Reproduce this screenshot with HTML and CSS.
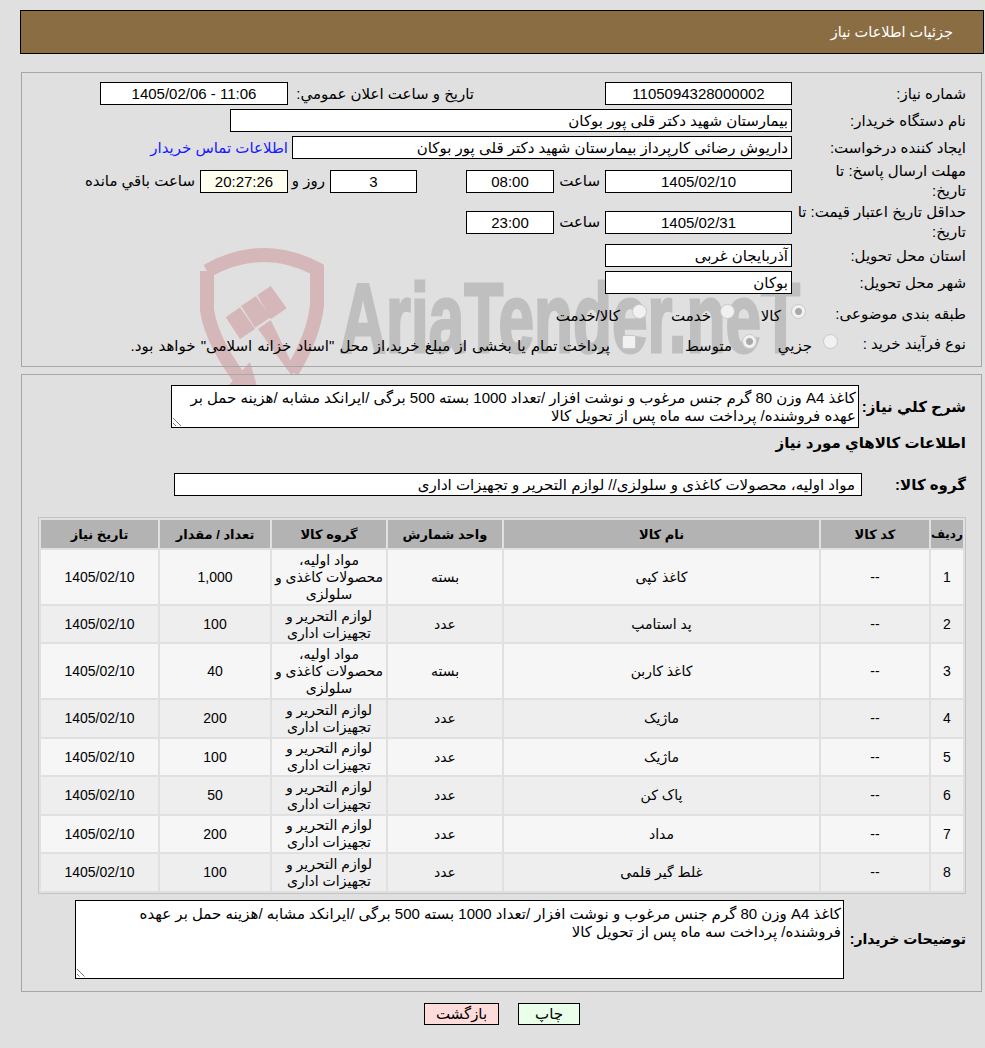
FILE: index.html
```html
<!DOCTYPE html>
<html lang="fa" dir="rtl">
<head>
    <meta charset="UTF-8">
    <title>جزئیات اطلاعات نیاز</title>
    <link rel="stylesheet" href="styles.css">
</head>
<body>
    <svg class="watermark" width="985" height="400" viewBox="0 0 985 400">
        <g class="mark-stroke">
            <path d="M207 271 Q262 240 317 269 L317 305 Q314 335 292 372"/>
            <path d="M207 271 L207 310 Q212 345 250 392"/>
        </g>
        <g class="mark-fill">
            <polygon points="225.7,317.3 240,307.3 255,329 240,339"/>
            <polygon points="241,306 256,296 270.7,317.3 255,327.7"/>
            <polygon points="257.3,295 270.7,286 286.7,308.3 270.7,319.3"/>
            <polygon points="258,329 270.7,320 295,370 291.7,375.7"/>
            <polygon points="250,362 257,386 228,386"/>
        </g>
        <text class="watermark-text" x="340" y="352" textLength="460" lengthAdjust="spacingAndGlyphs" direction="ltr">AriaTender.neT</text>
    </svg>

    <div class="page-title">جزئیات اطلاعات نیاز</div>

    <div class="panel panel-info">
        <div class="row">
            <div class="label">شماره نیاز:</div>
            <div class="field field-mid center">1105094328000002</div>
            <div class="label-announce">تاریخ و ساعت اعلان عمومي:</div>
            <div class="field field-announce center ltr">1405/02/06 - 11:06</div>
        </div>
        <div class="row">
            <div class="label">نام دستگاه خریدار:</div>
            <div class="field field-buyer">بیمارستان شهید دکتر قلی پور بوکان</div>
        </div>
        <div class="row">
            <div class="label">ایجاد کننده درخواست:</div>
            <div class="field field-creator">داریوش رضائی کارپرداز بیمارستان شهید دکتر قلی پور بوکان</div>
            <a class="contact" href="#">اطلاعات تماس خریدار</a>
        </div>
        <div class="row row-date">
            <div class="label">مهلت ارسال پاسخ: تا<br>تاریخ:</div>
            <div class="field field-mid center">1405/02/10</div>
            <div class="word">ساعت</div>
            <div class="field field-time center">08:00</div>
            <div class="field field-days center">3</div>
            <div class="word-days">روز و</div>
            <div class="field field-clock center">20:27:26</div>
            <div class="word-left">ساعت باقي مانده</div>
        </div>
        <div class="row row-date">
            <div class="label">حداقل تاریخ اعتبار قیمت: تا<br>تاریخ:</div>
            <div class="field field-mid center">1405/02/31</div>
            <div class="word">ساعت</div>
            <div class="field field-time center">23:00</div>
        </div>
        <div class="row row-place">
            <div class="label">استان محل تحویل:</div>
            <div class="field field-mid">آذربایجان غربی</div>
        </div>
        <div class="row">
            <div class="label">شهر محل تحویل:</div>
            <div class="field field-mid">بوکان</div>
        </div>
        <div class="row row-radio">
            <div class="label">طبقه بندی موضوعی:</div>
            <span class="radio radio-on radio-kala"></span><span class="radio-text text-kala">کالا</span>
            <span class="radio radio-khedmat"></span><span class="radio-text text-khedmat">خدمت</span>
            <span class="radio radio-both"></span><span class="radio-text text-both">کالا/خدمت</span>
        </div>
        <div class="row row-radio row-process">
            <div class="label">نوع فرآیند خرید :</div>
            <span class="radio radio-jozi"></span><span class="radio-text text-jozi">جزیي</span>
            <span class="radio radio-on radio-motavaset"></span><span class="radio-text text-motavaset">متوسط</span>
            <span class="check"></span><span class="radio-text text-payment">پرداخت تمام یا بخشی از مبلغ خرید،از محل "اسناد خزانه اسلامی" خواهد بود.</span>
        </div>
    </div>

    <div class="panel panel-items">
        <div class="row-desc">
            <div class="label-strong">شرح کلي نیاز:</div>
            <div class="area area-desc">کاغذ A4 وزن 80 گرم جنس مرغوب و نوشت افزار /تعداد 1000 بسته 500 برگی /ایرانکد مشابه /هزینه حمل بر عهده فروشنده/ پرداخت سه ماه پس از تحویل کالا<span class="grip"></span></div>
        </div>
        <div class="section-title">اطلاعات کالاهاي مورد نیاز</div>
        <div class="row-group">
            <div class="label-strong">گروه کالا:</div>
            <div class="field field-group">مواد اولیه، محصولات کاغذی و سلولزی// لوازم التحریر و تجهیزات اداری</div>
        </div>
        <table class="items">
            <thead>
                <tr>
                    <th class="col-num">ردیف</th>
                    <th class="col-code">کد کالا</th>
                    <th class="col-name">نام کالا</th>
                    <th class="col-unit">واحد شمارش</th>
                    <th class="col-group">گروه کالا</th>
                    <th class="col-qty">تعداد / مقدار</th>
                    <th class="col-date">تاریخ نیاز</th>
                </tr>
            </thead>
            <tbody>
                <tr class="tall"><td>1</td><td>--</td><td>کاغذ کپی</td><td>بسته</td><td>مواد اولیه، محصولات کاغذی و سلولزی</td><td>1,000</td><td>1405/02/10</td></tr>
                <tr><td>2</td><td>--</td><td>پد استامپ</td><td>عدد</td><td>لوازم التحریر و تجهیزات اداری</td><td>100</td><td>1405/02/10</td></tr>
                <tr class="tall"><td>3</td><td>--</td><td>کاغذ کاربن</td><td>بسته</td><td>مواد اولیه، محصولات کاغذی و سلولزی</td><td>40</td><td>1405/02/10</td></tr>
                <tr><td>4</td><td>--</td><td>ماژیک</td><td>عدد</td><td>لوازم التحریر و تجهیزات اداری</td><td>200</td><td>1405/02/10</td></tr>
                <tr><td>5</td><td>--</td><td>ماژیک</td><td>عدد</td><td>لوازم التحریر و تجهیزات اداری</td><td>100</td><td>1405/02/10</td></tr>
                <tr><td>6</td><td>--</td><td>پاک کن</td><td>عدد</td><td>لوازم التحریر و تجهیزات اداری</td><td>50</td><td>1405/02/10</td></tr>
                <tr><td>7</td><td>--</td><td>مداد</td><td>عدد</td><td>لوازم التحریر و تجهیزات اداری</td><td>200</td><td>1405/02/10</td></tr>
                <tr><td>8</td><td>--</td><td>غلط گیر قلمی</td><td>عدد</td><td>لوازم التحریر و تجهیزات اداری</td><td>100</td><td>1405/02/10</td></tr>
            </tbody>
        </table>
        <div class="row-notes">
            <div class="label-strong">توضیحات خریدار:</div>
            <div class="area area-notes">کاغذ A4 وزن 80 گرم جنس مرغوب و نوشت افزار /تعداد 1000 بسته 500 برگی /ایرانکد مشابه /هزینه حمل بر عهده فروشنده/ پرداخت سه ماه پس از تحویل کالا<span class="grip"></span></div>
        </div>
    </div>

    <div class="buttons">
        <button class="btn btn-print">چاپ</button>
        <button class="btn btn-back">بازگشت</button>
    </div>
</body>
</html>
```

FILE: styles.css
```css
body {
    font-family: "Liberation Sans", "DejaVu Sans", sans-serif;
    font-size: 15px;
    background: #e0e0e0;
    color: #000;
    margin: 0;
    padding: 10px 1px 0 20px;
    height: 1048px;
    overflow: hidden;
    box-sizing: border-box;
}
.page-title {
    background: #8b6d43;
    color: #fff;
    border: 1px solid #000;
    height: 42px;
    line-height: 42px;
    padding-right: 30px;
    font-size: 14.5px;
}
.panel {
    position: relative;
    border: 1px solid #a6a6a6;
    margin: 0 2px 0 1px;
    box-sizing: border-box;
}
.panel-info {
    margin-top: 18px;
    height: 295px;
    padding-top: 9px;
}
.panel-items {
    margin-top: 7px;
    height: 618px;
    padding-top: 10px;
}

/* watermark behind both panels */
.watermark {
    position: absolute;
    left: 0;
    top: 0;
}
.mark-stroke path {
    fill: none;
    stroke: #d6b7b9;
    stroke-width: 14;
}
.mark-fill polygon {
    fill: #d6b7b9;
}
.watermark-text {
    font-family: "Liberation Sans", sans-serif;
    font-weight: bold;
    font-size: 98px;
    fill: #bfbfbf;
    stroke: #bfbfbf;
    stroke-width: 3;
}

.row {
    display: flex;
    align-items: center;
    height: 23px;
    margin-bottom: 4px;
}
.label {
    width: 189px;
    padding-right: 15px;
    box-sizing: border-box;
    flex-shrink: 0;
    line-height: 20px;
}
.row-date {
    height: 36px;
    margin-bottom: 5px;
}
.row-place {
    margin-top: -1px;
}
.field {
    background: #fff;
    border: 1px solid #000;
    height: 21px;
    line-height: 21px;
    padding: 0 3px;
    white-space: nowrap;
    overflow: hidden;
    flex-shrink: 0;
}
.center {
    text-align: center;
}
.ltr {
    direction: ltr;
}
.field-mid { width: 179px; }
.field-announce { width: 180px; }
.field-buyer { width: 554px; }
.field-creator { width: 492px; }
.field-time { width: 80px; }
.field-days {
    width: 79px;
    margin-right: 49px;
}
.field-clock {
    width: 80px;
    background: #fffff0;
}
.label-announce {
    width: 181px;
    margin: 0 131px 0 5px;
    white-space: nowrap;
}
.contact {
    color: #1a1aff;
    text-decoration: none;
    margin-right: 4px;
    white-space: nowrap;
}
.word {
    width: 46px;
    padding-right: 5px;
    white-space: nowrap;
}
.word-days {
    width: 37px;
    padding-right: 5px;
    white-space: nowrap;
}
.word-left {
    margin-right: 5px;
    white-space: nowrap;
}

.row-radio {
    margin-top: 8px;
    margin-bottom: 7px;
}
.row-process {
    margin-top: 7px;
}
.radio {
    width: 13px;
    height: 13px;
    border-radius: 50%;
    background: #f1f1f1;
    border: 1px solid #c8c8c8;
    margin-bottom: 5px;
    flex-shrink: 0;
}
.radio-on {
    background: radial-gradient(circle, #a9a9a9 0 3px, #f1f1f1 4px);
}
.radio-text {
    margin-top: 4px;
    white-space: nowrap;
}
.radio-kala { margin-right: -14px; }
.text-kala { width: 21px; margin-right: 10px; }
.radio-khedmat { margin-right: 25px; }
.text-khedmat { width: 42px; margin-right: 9px; }
.radio-both { margin-right: 22px; }
.text-both { margin-right: 12px; }
.radio-jozi { margin-right: -46px; }
.text-jozi { width: 34px; margin-right: 11px; }
.radio-motavaset { margin-right: 21px; }
.text-motavaset { width: 45px; margin-right: 10px; }
.text-payment {
    margin-right: 12px;
    word-spacing: 1px;
}
.check {
    width: 12px;
    height: 12px;
    background: #f1f1f1;
    border: 1px solid #c8c8c8;
    border-radius: 2px;
    margin: 0 51px 4px 0;
    flex-shrink: 0;
}

.label-strong {
    font-weight: bold;
    white-space: nowrap;
    flex-shrink: 0;
}
.row-desc {
    display: flex;
    align-items: center;
    padding-right: 15px;
}
.row-desc .label-strong { width: 107px; }
.area {
    position: relative;
    background: #fff;
    border: 1px solid #000;
    line-height: 18px;
    padding: 3px 2px 3px 10px;
    box-sizing: border-box;
    flex-shrink: 0;
}
.area-desc {
    width: 688px;
    height: 43px;
}
.grip {
    position: absolute;
    left: 1px;
    bottom: 1px;
    width: 10px;
    height: 10px;
    background: repeating-linear-gradient(45deg, transparent 0 1.5px, #777 1.5px 2.5px, transparent 2.5px 3.5px);
    clip-path: polygon(0 0, 100% 100%, 0 100%);
}
.section-title {
    font-weight: bold;
    padding-right: 15px;
    margin-top: 3px;
    height: 24px;
    line-height: 24px;
}
.row-group {
    display: flex;
    align-items: center;
    padding-right: 15px;
    margin-top: 18px;
}
.row-group .label-strong { width: 104px; }
.field-group {
    width: 680px;
    padding: 0 6px 0 0;
}

.items {
    border-collapse: separate;
    border-spacing: 2px;
    border: 1px solid #c4c4c4;
    width: 928px;
    margin: 21px 15px 0 0;
    table-layout: fixed;
    text-align: center;
    font-size: 14px;
}
.items th {
    background: #b3b3b3;
    height: 28px;
    font-size: 13px;
    padding: 0;
}
.items th.col-num {
    font-size: 12px;
}
.items td {
    padding: 1px 2px 0;
    height: 35px;
    line-height: 17px;
}
.items tbody tr:nth-child(odd) td { background: #f6f6f6; }
.items tbody tr:nth-child(even) td { background: #eeeeee; }
.items tr.tall td { height: 53px; }
.items tbody tr:nth-child(n+4) td { height: 35.5px; }
.col-num { width: 32px; }
.col-code { width: 108px; }
.col-name { width: 315px; }
.col-unit { width: 114px; }
.col-group { width: 114px; }
.col-qty { width: 110px; }
.col-date { width: 117px; }

.row-notes {
    display: flex;
    align-items: center;
    padding-right: 15px;
    margin-top: 6px;
}
.row-notes .label-strong {
    width: 122px;
    font-size: 14px;
}
.area-notes {
    width: 769px;
    height: 79px;
    padding-top: 4px;
}

.buttons {
    display: flex;
    justify-content: center;
    gap: 19px;
    margin-top: 11px;
}
.btn {
    font-family: inherit;
    font-size: 15px;
    border: 1px solid #000;
    height: 22px;
    padding: 0;
    border-radius: 0;
    color: #000;
}
.btn-print {
    background: #e9ffe9;
    width: 62px;
}
.btn-back {
    background: #ffdcdc;
    width: 75px;
}
```
